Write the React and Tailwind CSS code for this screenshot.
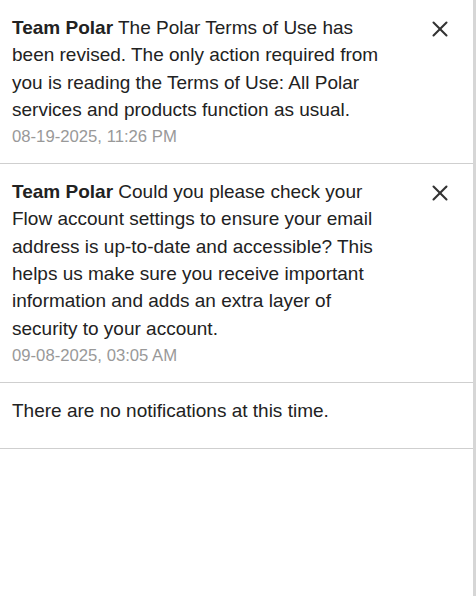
import { X } from 'lucide-react'

const items = [
  {
    id: 1,
    body: 'The Polar Terms of Use has been revised. The only action required from you is reading the Terms of Use: All Polar services and products function as usual.',
    date: '08-19-2025, 11:26 PM',
  },
  {
    id: 2,
    body: 'Could you please check your Flow account settings to ensure your email address is up-to-date and accessible? This helps us make sure you receive important information and adds an extra layer of security to your account.',
    date: '09-08-2025, 03:05 AM',
  },
]

export default function App() {
  return (
    <div
      className="min-h-screen w-[476px] bg-white flex"
      style={{ fontFamily: '"Liberation Sans", Arial, sans-serif' }}
    >
      <div className="w-[473px]">
        {items.map((n) => (
          <div key={n.id} className="flex border-b border-[#cfcfcf] pl-3 pr-[20px] pt-[14px] pb-[14px]">
            <div className="w-[386px]">
              <p className="text-[19px] leading-[27.3px] text-[#222]">
                <span className="font-bold">Team Polar</span> {n.body}
              </p>
              <p className="mt-[2px] text-[16.7px] leading-[24px] text-[#999]">{n.date}</p>
            </div>
            <button className="ml-auto mt-[2px] h-[26px] w-[26px] flex items-center justify-center text-[#333]" aria-label="Close">
              <X size={26} strokeWidth={1.9} />
            </button>
          </div>
        ))}
        <div className="border-b border-[#cfcfcf] pl-3 pt-[14px] pb-[24px]">
          <p className="text-[19px] leading-[27px] text-[#222]">There are no notifications at this time.</p>
        </div>
      </div>
      <div className="w-[3px] bg-[#d6d6d6]" />
    </div>
  )
}
